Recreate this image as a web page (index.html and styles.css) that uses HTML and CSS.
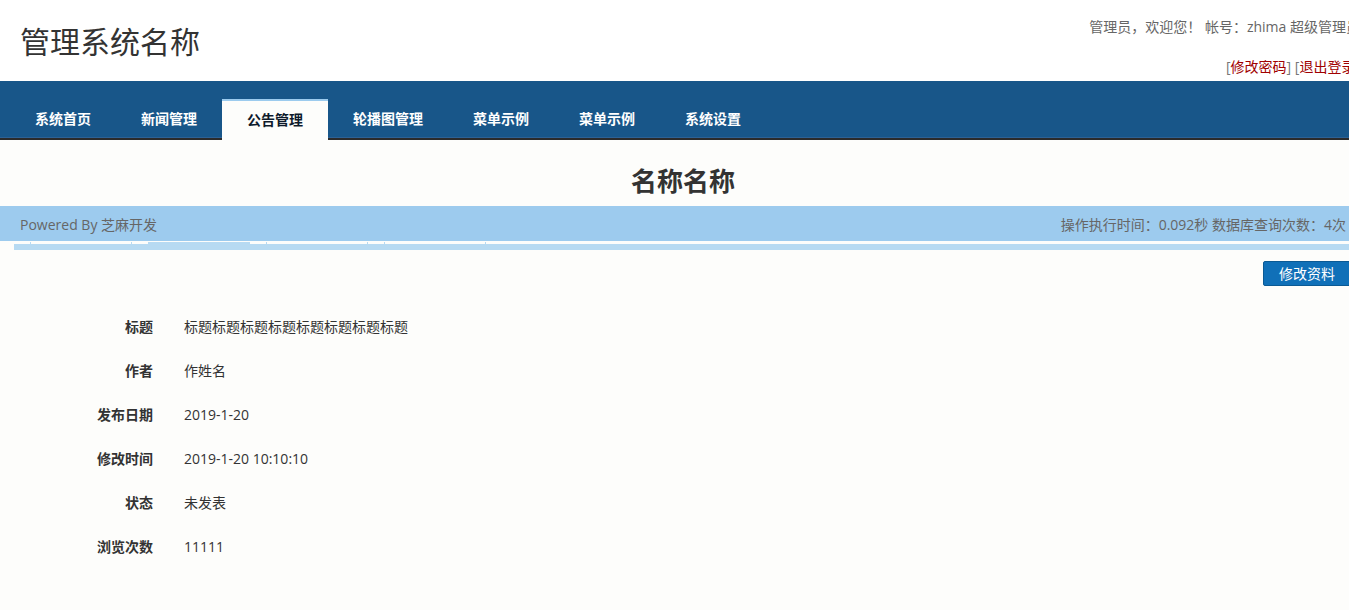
FILE: index.html
```html
<!DOCTYPE html>
<html lang="zh-CN">
<head>
<meta charset="utf-8">
<title>管理系统名称</title>
<link rel="stylesheet" href="styles.css">
</head>
<body>
<div class="page">
  <header class="header">
    <h1 class="logo">管理系统名称</h1>
    <div class="user">
      <div class="user-line">管理员，欢迎您！ 帐号：zhima 超级管理员</div>
      <div class="user-links">[<a href="#">修改密码</a>] [<a href="#">退出登录</a>]</div>
    </div>
  </header>
  <nav class="nav">
    <ul class="nav-list">
      <li class="nav-item">系统首页</li>
      <li class="nav-item">新闻管理</li>
      <li class="nav-item active">公告管理</li>
      <li class="nav-item">轮播图管理</li>
      <li class="nav-item">菜单示例</li>
      <li class="nav-item">菜单示例</li>
      <li class="nav-item">系统设置</li>
    </ul>
  </nav>
  <main class="main">
    <h2 class="page-title">名称名称</h2>
    <div class="band">
      <span>Powered By 芝麻开发</span>
      <span>操作执行时间：0.092秒 数据库查询次数：4次</span>
    </div>
    <div class="tabstrip">
      <ul class="tabs">
        <li class="tab"></li>
        <li class="tab on"></li>
        <li class="tab"></li>
        <li class="tab"></li>
      </ul>
      <div class="tabbar"></div>
    </div>
    <div class="actions">
      <button class="btn" type="button">修改资料</button>
    </div>
    <dl class="info">
      <dt>标题</dt><dd>标题标题标题标题标题标题标题标题</dd>
      <dt>作者</dt><dd>作姓名</dd>
      <dt>发布日期</dt><dd>2019-1-20</dd>
      <dt>修改时间</dt><dd>2019-1-20 10:10:10</dd>
      <dt>状态</dt><dd>未发表</dd>
      <dt>浏览次数</dt><dd>11111</dd>
    </dl>
  </main>
</div>
</body>
</html>
```
FILE: styles.css
```css
html {
  overflow: hidden;
}
body {
  margin: 0;
  background: #fdfdfb;
  font-family: "Open Sans", "Noto Sans CJK SC", sans-serif;
  font-size: 14px;
  color: #333;
}
.page {
  width: 1360px;
}
.header {
  height: 81px;
  background: #fff;
  display: flex;
  justify-content: space-between;
}
.logo {
  margin: 0;
  padding-left: 20px;
  font-size: 30px;
  font-weight: normal;
  line-height: 81px;
  color: #333;
  font-family: "Noto Sans CJK SC", sans-serif;
}
.user {
  padding-top: 18px;
  text-align: right;
  color: #666;
  line-height: 18px;
}
.user-links {
  margin-top: 22px;
  color: #777;
}
.user-links a {
  color: #a00000;
  text-decoration: none;
}
.nav {
  height: 56px;
  background: #185689;
  border-bottom: 1px solid #2d6194;
  box-shadow: 0 2px 0 #2b2b2b;
  margin-bottom: 2px;
}
.nav-list {
  list-style: none;
  margin: 0;
  padding: 0 0 0 10px;
  height: 100%;
  display: flex;
  align-items: flex-end;
}
.nav-item {
  height: 38px;
  line-height: 38px;
  padding: 0 25px;
  color: #fff;
  font-weight: bold;
  font-family: "Noto Sans CJK SC", sans-serif;
}
.nav-item.active {
  position: relative;
  z-index: 1;
  background: #fdfdfb;
  color: #0e1a2b;
  border-top: 2px solid #9ccbee;
  height: 36px;
  line-height: 36px;
  padding-bottom: 3px;
  margin-bottom: -3px;
}
.page-title {
  margin: 0;
  padding: 20px 0 6px 6px;
  line-height: 40px;
  text-align: center;
  font-size: 26px;
  font-weight: bold;
  color: #333;
  font-family: "Noto Sans CJK SC", sans-serif;
}
.band {
  height: 35px;
  background: #9dcbee;
  display: flex;
  justify-content: space-between;
  align-items: center;
  padding: 0 14px 0 20px;
  color: #666;
}
.tabstrip {
  margin: 1px 0 0 14px;
}
.tabs {
  list-style: none;
  margin: 0;
  padding: 0 0 0 16px;
  display: flex;
  height: 2px;
}
.tab {
  width: 100px;
  height: 2px;
  border-left: 1px solid #b7daf2;
  border-right: 1px solid #b7daf2;
  margin-right: 16px;
}
.tab.on {
  background: #b7daf2;
}
.tabbar {
  height: 6px;
  background: #b7daf2;
}
.actions {
  display: flex;
  justify-content: flex-end;
  margin-top: 11px;
  padding-right: 9px;
}
.btn {
  height: 25px;
  padding: 0 15px;
  border: 1px solid #0b5a94;
  border-radius: 2px;
  background: #1070b8;
  color: #fff;
  font-size: 14px;
  font-family: "Noto Sans CJK SC", sans-serif;
  line-height: 23px;
}
.info {
  margin: 18px 0 0;
  display: grid;
  grid-template-columns: 153px 1fr;
  column-gap: 31px;
  grid-auto-rows: 44px;
  align-items: center;
}
.info dt {
  text-align: right;
  font-weight: bold;
  color: #333;
  font-family: "Noto Sans CJK SC", sans-serif;
}
.info dd {
  margin: 0;
  color: #333;
}
```
